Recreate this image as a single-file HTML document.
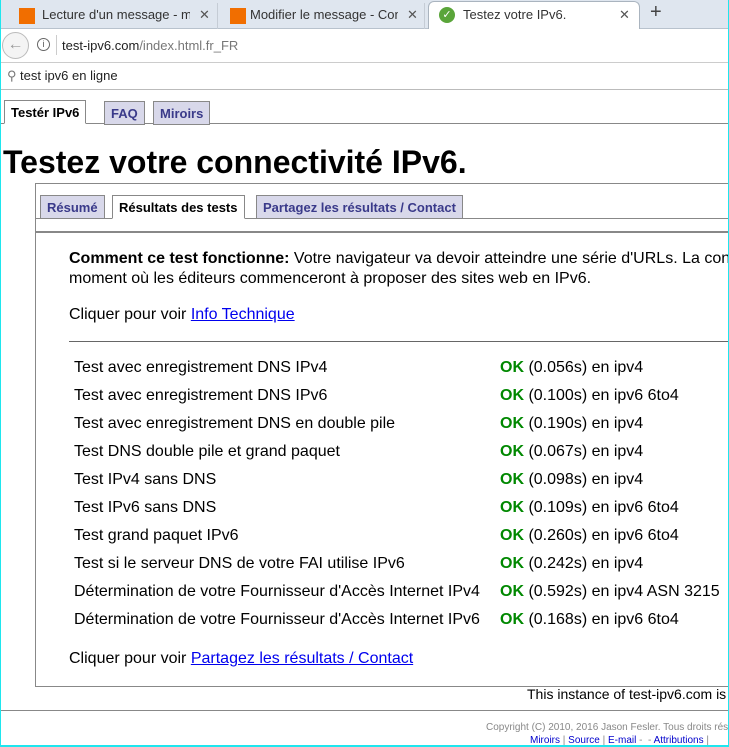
<!DOCTYPE html>
<html><head><meta charset="utf-8"><style>
*{margin:0;padding:0;box-sizing:border-box}
html,body{width:729px;height:747px;overflow:hidden}
body{position:relative;font-family:"Liberation Sans",Arial,sans-serif;background:#fff}
#wrap{position:absolute;left:0;top:0;width:729px;height:747px;overflow:hidden}
.a{position:absolute;white-space:nowrap}
#tabbar{left:0;top:0;width:729px;height:29px;background:#dfe6ef;border-bottom:1px solid #b8c2cd}
.btab{top:3px;height:26px;font-size:13px;color:#333;padding:4px 0 0 38px;overflow:hidden}
.ico{position:absolute;left:15px;top:5px;width:16px;height:16px;background:#f16e00}
.x{position:absolute;font-size:13px;color:#555}
#url{left:0;top:29px;width:729px;height:34px;background:#fff;border-bottom:1px solid #ccc}
#srch{left:0;top:63px;width:729px;height:27px;background:#fff;border-bottom:1px solid #bbb}
.t1{font-size:13px;font-weight:bold;height:24px;padding:4px 6px 0;border:1px solid #888;background:#d8d8ea;color:#3a3a8a}
.t2{font-size:13px;font-weight:bold;height:24px;padding:4px 6px 0;border:1px solid #888;background:#d8d8ea;color:#3a3a8a}
.f16{font-size:16px;color:#000}
.ok{color:#008800;font-weight:bold}
a{color:#0000ee}
</style></head><body><div id="wrap">
<div id="tabbar" class="a"></div>
<div class="a btab" style="left:4px;width:214px;border-right:1px solid #c5ccd5"><div class="ico"></div><span style="display:inline-block;width:148px;overflow:hidden;vertical-align:top">Lecture d'un message - mail</span><span class="x" style="left:195px;top:4px">✕</span></div>
<div class="a btab" style="left:220px;width:205px;border-right:1px solid #c5ccd5"><div class="ico" style="left:10px"></div><span style="margin-left:-8px;display:inline-block;width:148px;overflow:hidden;vertical-align:top">Modifier le message - Comm</span><span class="x" style="left:187px;top:4px">✕</span></div>
<div class="a btab" style="left:428px;top:1px;width:212px;height:29px;background:#fff;border:1px solid #aab4bf;border-bottom:none;border-radius:6px 6px 0 0;padding-left:34px;padding-top:5px">
<div style="position:absolute;left:10px;top:5px;width:16px;height:16px;border-radius:50%;background:#5aa53a;color:#fff;font-size:11px;text-align:center;line-height:16px">✓</div>Testez votre IPv6.<span class="x" style="left:190px;top:5px">✕</span></div>
<div class="a" style="left:650px;top:1px;font-size:20px;color:#444">+</div>
<div id="url" class="a"></div>
<div class="a" style="left:2px;top:32px;width:27px;height:27px;border-radius:50%;border:1px solid #bbb;background:#f4f4f4;color:#999;font-size:16px;text-align:center;line-height:24px">←</div>
<div class="a" style="left:37px;top:38px;width:13px;height:13px;border-radius:50%;border:1px solid #666;font-size:9px;text-align:center;line-height:11px;color:#555">i</div>
<div class="a" style="left:56px;top:35px;width:1px;height:20px;background:#ccc"></div>
<div class="a" style="left:62px;top:38px;font-size:13px;color:#222">test-ipv6.com<span style="color:#777">/index.html.fr_FR</span></div>
<div id="srch" class="a"></div>
<div class="a" style="left:7px;top:68px;font-size:13px;color:#777">⚲</div>
<div class="a" style="left:20px;top:68px;font-size:13px;color:#222">test ipv6 en ligne</div>

<div class="a" style="left:0;top:123px;width:729px;height:1px;background:#888"></div>
<div class="a t1" style="left:4px;top:100px;background:#fff;color:#000;height:24px;border-bottom:1px solid #fff">Testér IPv6</div>
<div class="a t1" style="left:104px;top:101px">FAQ</div>
<div class="a t1" style="left:153px;top:101px">Miroirs</div>

<div class="a" style="left:3px;top:144px;font-size:32px;font-weight:bold;color:#000">Testez votre connectivité IPv6.</div>

<div class="a" style="left:35px;top:183px;width:700px;height:504px;border:1px solid #888"></div>
<div class="a" style="left:36px;top:218px;width:700px;height:1px;background:#888"></div>
<div class="a" style="left:36px;top:231px;width:700px;height:2px;background:#888"></div>
<div class="a t2" style="left:40px;top:195px">Résumé</div>
<div class="a t2" style="left:112px;top:195px;background:#fff;color:#000;border-bottom:1px solid #fff">Résultats des tests</div>
<div class="a t2" style="left:256px;top:195px">Partagez les résultats / Contact</div>

<div class="a f16" style="left:69px;top:249px;line-height:20px">
<b>Comment ce test fonctionne:</b> Votre navigateur va devoir atteindre une série d'URLs. La connectivité<br>moment où les éditeurs commenceront à proposer des sites web en IPv6.</div>
<div class="a f16" style="left:69px;top:306px">Cliquer pour voir <a href="#">Info Technique</a></div>
<div class="a" style="left:69px;top:341px;width:660px;height:1px;background:#666"></div>

<div class="a f16" style="left:74px;top:354px;line-height:28px">
Test avec enregistrement DNS IPv4<br>Test avec enregistrement DNS IPv6<br>Test avec enregistrement DNS en double pile<br>Test DNS double pile et grand paquet<br>Test IPv4 sans DNS<br>Test IPv6 sans DNS<br>Test grand paquet IPv6<br>Test si le serveur DNS de votre FAI utilise IPv6<br>Détermination de votre Fournisseur d'Accès Internet IPv4<br>Détermination de votre Fournisseur d'Accès Internet IPv6</div>
<div class="a f16" style="left:500px;top:354px;line-height:28px">
<span class="ok">OK</span> (0.056s) en ipv4<br><span class="ok">OK</span> (0.100s) en ipv6 6to4<br><span class="ok">OK</span> (0.190s) en ipv4<br><span class="ok">OK</span> (0.067s) en ipv4<br><span class="ok">OK</span> (0.098s) en ipv4<br><span class="ok">OK</span> (0.109s) en ipv6 6to4<br><span class="ok">OK</span> (0.260s) en ipv6 6to4<br><span class="ok">OK</span> (0.242s) en ipv4<br><span class="ok">OK</span> (0.592s) en ipv4 ASN 3215<br><span class="ok">OK</span> (0.168s) en ipv6 6to4</div>

<div class="a f16" style="left:69px;top:650px">Cliquer pour voir <a href="#">Partagez les résultats / Contact</a></div>
<div class="a" style="left:527px;top:686px;font-size:14px;color:#000">This instance of test-ipv6.com is provided</div>
<div class="a" style="left:0;top:710px;width:729px;height:1px;background:#888"></div>
<div class="a" style="left:486px;top:722px;font-size:10px;color:#888">Copyright (C) 2010, 2016 Jason Fesler. Tous droits réservés</div>
<div class="a" style="left:530px;top:735px;font-size:10px;color:#888"><span style="color:#00c">Miroirs</span> | <span style="color:#00c">Source</span> | <span style="color:#00c">E-mail</span> - &nbsp;- <span style="color:#00c">Attributions</span> |</div>
<div class="a" style="left:0;top:0;width:1px;height:747px;background:#1ee6ee"></div>
<div class="a" style="left:728px;top:0;width:1px;height:747px;background:#1ee6ee"></div>
<div class="a" style="left:0;top:745px;width:729px;height:2px;background:#1ee6ee"></div>
</div></body></html>
